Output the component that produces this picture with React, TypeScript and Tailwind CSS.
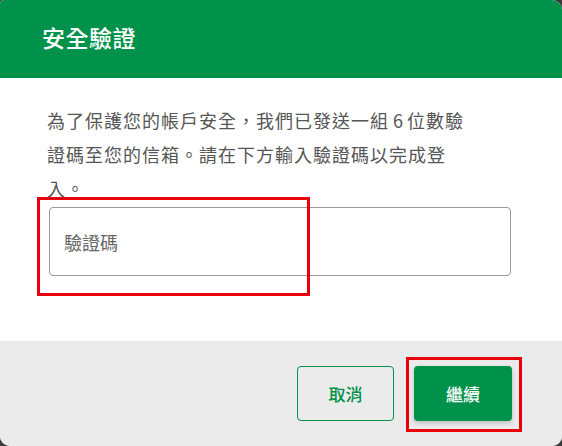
import React from "react";

export default function App() {
  const font = { fontFamily: '"Noto Sans CJK TC", "Noto Sans", sans-serif' };
  return (
    <div className="w-[562px] h-[446px] bg-[#3a3a3a] overflow-hidden" style={font}>
      <div className="relative w-[562px] h-[446px] flex flex-col bg-white overflow-hidden rounded-tl-[4px] rounded-tr-[10px] rounded-b-[10px]">
        <div className="h-[78px] shrink-0 bg-[#00914b] flex items-center pl-[42px] pb-[3px]">
          <h1 className="text-white text-[23px] leading-none font-medium tracking-[0.5px]">安全驗證</h1>
        </div>
        <div className="flex-1 bg-white pt-[25px] pl-[47px] pr-[51px]">
          <p className="whitespace-nowrap text-[#555555] text-[18px] leading-[34px] tracking-[1px]">
            為了保護您的帳戶安全，我們已發送一組<span className="tracking-normal"> 6 </span>位數驗
            <br />
            證碼至您的信箱。請在下方輸入驗證碼以完成登
            <br />
            入。
          </p>
          <div className="mt-[2px] ml-[2px] h-[69px] border border-[#9a9a9a] rounded-[4px] flex items-center pl-[14px]">
            <span className="text-[#666666] text-[18px] leading-none">驗證碼</span>
          </div>
        </div>
        <div className="h-[105px] shrink-0 bg-[#ebebeb] flex items-center justify-end gap-[20px] pr-[50px]">
          <button className="w-[97px] h-[55px] border border-[#00914b] rounded-[4px] text-[#00914b] text-[17px] font-medium bg-transparent">
            取消
          </button>
          <button className="w-[98px] h-[55px] rounded-[4px] bg-[#00914b] text-white text-[17px] font-medium shadow-[0_2px_4px_rgba(0,0,0,0.2)]">
            繼續
          </button>
        </div>
        <div className="absolute left-[37px] top-[197px] w-[273px] h-[99px] border-[3px] border-[#e8000b] pointer-events-none" />
        <div className="absolute left-[406px] top-[357px] w-[116px] h-[75px] border-[3px] border-[#e8000b] pointer-events-none" />
      </div>
    </div>
  );
}
